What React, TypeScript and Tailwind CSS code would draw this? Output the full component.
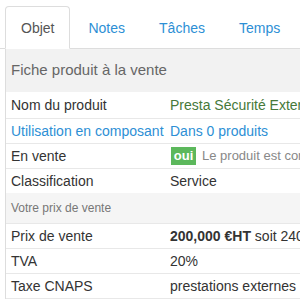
import React from "react";

function Row({
  label,
  children,
  labelClass = "text-[#333]",
  first = false,
}: {
  label: string;
  children: React.ReactNode;
  labelClass?: string;
  first?: boolean;
}) {
  return (
    <div
      className={
        "flex items-center whitespace-nowrap text-[14px] " +
        (first ? "h-[26px]" : "h-[25px] border-t border-[#e8e8e8]")
      }
    >
      <div className={"w-[164px] shrink-0 pl-[5px] " + labelClass}>{label}</div>
      <div className="flex items-center text-[#333]">{children}</div>
    </div>
  );
}

export default function App() {
  return (
    <div
      className="w-[300px] h-[300px] overflow-hidden bg-white"
      style={{ fontFamily: '"Liberation Sans", Arial, sans-serif' }}
    >
      <div className="flex pl-[5px] pt-[6px] border-b border-[#ddd] text-[14px] leading-[21px] whitespace-nowrap">
        <div className="-mb-px mr-[2px] px-[15px] pt-[11px] pb-[9px] border border-[#ddd] border-b-transparent rounded-t-[4px] bg-white text-[#555]">
          Objet
        </div>
        <div className="-mb-px mr-[2px] px-[15px] pt-[11px] pb-[9px] border border-transparent text-[#2d8fd5]">
          Notes
        </div>
        <div className="-mb-px mr-[2px] px-[15px] pt-[11px] pb-[9px] border border-transparent text-[#2d8fd5]">
          Tâches
        </div>
        <div className="-mb-px mr-[2px] px-[15px] pt-[11px] pb-[9px] border border-transparent text-[#2d8fd5]">
          Temps
        </div>
      </div>
      <div className="ml-[5px] border-l border-[#ddd]">
        <div className="h-[43px] bg-[#f2f2f2] pl-[5px] flex items-center text-[15px] text-[#666] whitespace-nowrap">
          Fiche produit à la vente
        </div>
        <Row label="Nom du produit" first>
          <span className="text-[#46793a]">Presta Sécurité Externe</span>
        </Row>
        <Row label="Utilisation en composant" labelClass="text-[#2d8fd5]">
          <span className="text-[#2d8fd5]">Dans 0 produits</span>
        </Row>
        <Row label="En vente">
          <span className="ml-[1px] inline-flex h-[18px] w-[25px] items-center justify-center bg-[#5cb85c] text-white font-bold text-[13px]">
            oui
          </span>
          <span className="ml-[6px] text-[13px] text-[#888]">Le produit est commercialisable</span>
        </Row>
        <Row label="Classification">Service</Row>
        <div className="h-[30px] bg-[#f5f5f5] pl-[5px] flex items-center text-[12px] text-[#777] whitespace-nowrap">
          Votre prix de vente
        </div>
        <Row label="Prix de vente">
          <span className="font-bold">200,000 €HT</span>
          <span>&nbsp;soit 240,000 €TTC</span>
        </Row>
        <Row label="TVA">20%</Row>
        <Row label="Taxe CNAPS">prestations externes</Row>
        <div className="border-t border-[#e8e8e8]"></div>
      </div>
    </div>
  );
}
